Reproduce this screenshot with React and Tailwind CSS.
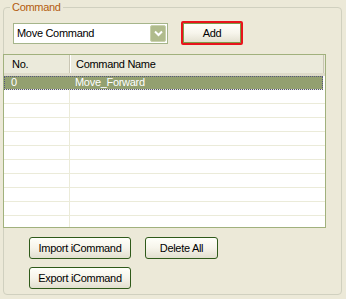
import React from 'react'

const rows = [
    { no: '0', name: 'Move_Forward' },
    ...Array.from({ length: 10 }, () => ({ no: '', name: '' }))
]

function XpButton({ label, className = '' }) {
    return (
        <button
            className={`h-[22px] rounded-[3px] border border-[#2f5a1a] bg-linear-to-b from-[#fffffa] via-[#f6f4ea] to-[#e2dfcf] text-black ${className}`}
        >
            {label}
        </button>
    )
}

export default function App() {
    return (
        <div
            className="w-[346px] h-[299px] bg-[#ece9d8] overflow-hidden pt-[1px] text-[11px] tracking-[-0.3px] text-black"
            style={{ fontFamily: '"Liberation Sans", Arial, sans-serif' }}
        >
            <fieldset className="ml-[3px] w-[339px] h-[294px] border border-[#d0d0bf] rounded-[4px] p-0 m-0 min-w-0">
                <legend className="ml-[6px] px-[2px] leading-[13px] text-[#b35c0f]">Command</legend>

                {/* combo + add */}
                <div className="flex items-center mt-[7px] ml-[9px]">
                    <div className="w-[155px] h-[21px] bg-white border border-[#a5b58a] flex items-center justify-between">
                        <span className="pl-[3px] leading-[13px]">Move Command</span>
                        <div className="w-[16px] h-[17px] mr-[1px] rounded-[2px] bg-[#b0bb8c] border border-[#c9d1ad] flex items-center justify-center">
                            <svg width="9" height="7" viewBox="0 0 9 7">
                                <path d="M1 1.5 L4.5 5 L8 1.5" fill="none" stroke="#fff" strokeWidth="2" />
                            </svg>
                        </div>
                    </div>
                    <div className="ml-[13px] w-[62px] h-[24px] border-2 border-[#e8141c] rounded-[2px]">
                        <button className="w-full h-full border border-[#7f9a48] bg-linear-to-b from-[#fffffa] via-[#f7f5ec] to-[#e4e1d1] text-black">
                            Add
                        </button>
                    </div>
                </div>

                {/* list */}
                <div className="mt-[9px] -ml-[1px] w-[323px] h-[174px] border border-[#a1b17d] bg-white overflow-hidden">
                    <div className="flex h-[21px] bg-[#ebeadb] border-b-[3px] border-[#dedbca]">
                        <div className="w-[66px] pl-[8px] flex items-center border-r border-[#c9c6b4] shadow-[1px_0_0_#fff]">No.</div>
                        <div className="flex-1 pl-[6px] flex items-center border-r border-[#c9c6b4] mr-[1px]">Command Name</div>
                    </div>
                    {rows.map((r, i) => (
                        <div
                            key={i}
                            className={`flex h-[14px] border-b border-[#ebebd9] ${
                                i === 0 ? 'bg-[#93a070] text-white mr-[2px] outline-1 outline-dotted outline-[#55557f] -outline-offset-1' : ''
                            }`}
                        >
                            <div className={`w-[66px] pl-[7px] leading-[13px] ${i === 0 ? '' : 'border-r border-[#ebebd9]'}`}>{r.no}</div>
                            <div className="flex-1 pl-[5px] leading-[13px]">{r.name}</div>
                        </div>
                    ))}
                </div>

                {/* buttons */}
                <div className="mt-[9px] ml-[25px] flex flex-col gap-[8px]">
                    <div className="flex gap-[14px]">
                        <XpButton label="Import iCommand" className="w-[102px]" />
                        <XpButton label="Delete All" className="w-[73px]" />
                    </div>
                    <XpButton label="Export iCommand" className="w-[102px]" />
                </div>
            </fieldset>
        </div>
    )
}
